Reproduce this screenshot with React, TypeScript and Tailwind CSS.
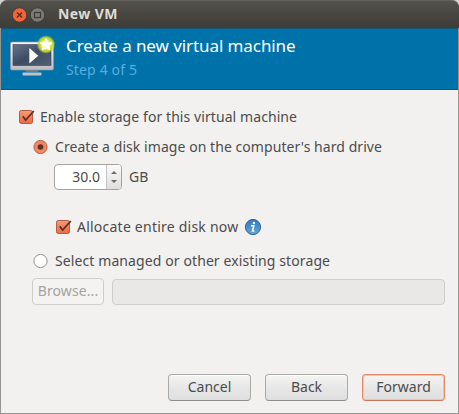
import type { ReactNode } from "react";

function CheckBox() {
  return (
    <svg width="16" height="16" viewBox="0 0 16 16" className="shrink-0">
      <defs>
        <linearGradient id="check" x1="0" y1="0" x2="0" y2="1">
          <stop offset="0" stopColor="#f79a78" />
          <stop offset="1" stopColor="#f06a40" />
        </linearGradient>
      </defs>
      <rect x="0.5" y="1.5" width="13" height="13" rx="1.8" fill="url(#check)" stroke="#b05f45" />
      <path d="M3.8 7.2 6.6 11 14.8 2" fill="none" stroke="#57342a" strokeWidth="1.8" />
    </svg>
  );
}

function Radio({ checked }: { checked?: boolean }) {
  return (
    <svg width="16" height="16" viewBox="0 0 16 16" className="shrink-0">
      <circle cx="7.5" cy="8" r="6.6" fill={checked ? "#f58560" : "#fff"} stroke={checked ? "#b8654a" : "#949290"} />
      {checked && <circle cx="7.5" cy="8" r="2.8" fill="#57342a" />}
    </svg>
  );
}

function MachineIcon() {
  return (
    <svg width="48" height="48" viewBox="0 0 48 48" className="shrink-0">
      <defs>
        <linearGradient id="bezel" x1="0" y1="0" x2="0" y2="1">
          <stop offset="0" stopColor="#fafafa" />
          <stop offset="1" stopColor="#bcbcc0" />
        </linearGradient>
        <linearGradient id="screen" x1="0" y1="0" x2="1" y2="1">
          <stop offset="0" stopColor="#66748c" />
          <stop offset="0.5" stopColor="#3d4b63" />
          <stop offset="1" stopColor="#526078" />
        </linearGradient>
        <radialGradient id="glow">
          <stop offset="0.4" stopColor="#eef250" />
          <stop offset="0.75" stopColor="#c6dc28" stopOpacity="0.9" />
          <stop offset="1" stopColor="#a5c934" stopOpacity="0" />
        </radialGradient>
      </defs>
      <path d="M18 38h12v3H18z" fill="#77777c" />
      <rect x="14.5" y="41.5" width="19" height="3" rx="1" fill="#c0c2c5" />
      <rect x="2.5" y="11" width="43" height="28" rx="1.5" fill="url(#bezel)" stroke="#8d99a5" strokeWidth="0.7" />
      <rect x="5" y="13.5" width="38" height="21" fill="url(#screen)" stroke="#3a4152" strokeWidth="0.6" />
      <path d="M21.3 17v15.5l9-7.7z" fill="#fff" />
      <circle cx="38" cy="13.5" r="9.5" fill="url(#glow)" />
      <path d="m38 7.6 1.8 3.8 4.2.5-3.1 2.9.8 4.1-3.7-2-3.7 2 .8-4.1-3.1-2.9 4.2-.5z" fill="#fffff4" stroke="#fffff4" strokeLinejoin="round" />
    </svg>
  );
}

function InfoIcon() {
  return (
    <svg width="18" height="18" viewBox="0 0 18 18" className="shrink-0">
      <defs>
        <linearGradient id="info" x1="0" y1="0" x2="0" y2="1">
          <stop offset="0" stopColor="#347abb" />
          <stop offset="1" stopColor="#65a5d5" />
        </linearGradient>
      </defs>
      <circle cx="9" cy="9" r="7.6" fill="url(#info)" stroke="#2c629a" />
      <circle cx="9.9" cy="5" r="1.2" fill="#fff" />
      <path d="M7 7.7h2.8L8.5 13h1.8" fill="none" stroke="#fff" strokeWidth="1.5" />
    </svg>
  );
}

function Button({ children, primary }: { children: ReactNode; primary?: boolean }) {
  return (
    <button
      className={`flex h-[27px] w-[83px] items-center justify-center rounded-[4px] border bg-linear-to-b from-[#f4f4f3] via-[#e5e5e5] via-60% to-[#dfdfdf] pb-px text-[14px] ${
        primary
          ? "border-[#e98765] border-b-[#c9785a] shadow-[inset_0_0_0_1px_#f3c3b2]"
          : "border-[#a9a9a6] border-b-[#8e8e8b] shadow-[inset_0_1px_0_#fff]"
      }`}
    >
      {children}
    </button>
  );
}

export default function App() {
  return (
    <div className="flex h-[414px] w-[459px] flex-col bg-[#d5d3d1] font-['Noto_Sans','Open_Sans',sans-serif] text-[14px] leading-[20px] text-[#4c4c4c]">
      <header className="flex h-7 shrink-0 items-center rounded-t-[7px] border-t border-[#62605a] bg-linear-to-b from-[#53514b] to-[#3d3c38] pl-3">
        <svg width="34" height="16" viewBox="0 0 34 16" className="shrink-0">
          <circle cx="7.5" cy="8" r="7.2" fill="#f26538" stroke="#383631" strokeWidth="0.8" />
          <path d="m5 5.5 5 5m0-5-5 5" stroke="#55301f" strokeWidth="1.4" />
          <circle cx="25.5" cy="8" r="7.2" fill="#7d7b75" stroke="#383631" strokeWidth="0.8" />
          <rect x="22.5" y="5.5" width="6" height="5" fill="none" stroke="#3b3a35" strokeWidth="1.2" />
        </svg>
        <h1 className="ml-3 whitespace-nowrap pb-px text-[14px] font-bold tracking-[0.4px] text-[#dfdbd2]">New VM</h1>
      </header>
      <div className="flex min-h-0 grow flex-col border-x border-b border-[#969490] bg-[#f2f1f0]">
        <section className="flex h-[62px] shrink-0 border-y border-[#145578] bg-[#0072aa] pl-[7px] pt-[2px]">
          <MachineIcon />
          <div className="ml-[10px] whitespace-nowrap pt-1">
            <h2 className="text-[17px] leading-[22px] tracking-[-0.08px] text-white">Create a new virtual machine</h2>
            <p className="mt-[3px] text-[14px] leading-[20px] tracking-[0.15px] text-[#57ade0]">Step 4 of 5</p>
          </div>
        </section>
        <main className="flex grow flex-col whitespace-nowrap pl-[18px] pr-[13px] pt-[17px]">
          <label className="flex h-5 items-center gap-[5px]"><CheckBox /><span className="tracking-[0.08px]">Enable storage for this virtual machine</span></label>
          <label className="ml-[14px] mt-[10px] flex h-5 items-center gap-[6px]"><Radio checked /><span className="tracking-[0.06px]">Create a disk image on the computer's hard drive</span></label>
          <div className="ml-[35px] mt-[7px] flex h-[26px] items-center">
            <div className="flex h-[26px] w-[68px] overflow-hidden rounded-[4px] border border-[#a5a4a1] bg-white">
              <span className="flex w-[51px] items-center justify-end pr-[6px]">30.0</span>
              <span className="flex grow items-center justify-center border-l border-[#c5c4c2] bg-linear-to-b from-[#fafafa] to-[#dededd]">
                <svg width="8" height="14" viewBox="0 0 8 14"><path d="M1 4 4 1l3 3zm0 6 3 3 3-3z" fill="#6b6b69" /></svg>
              </span>
            </div>
            <span className="ml-[7px]">GB</span>
          </div>
          <div className="ml-[37px] mt-[27px] flex h-5 items-center">
            <label className="flex items-center gap-[5px]"><CheckBox /><span className="tracking-[0.23px]">Allocate entire disk now</span></label>
            <span className="ml-[6px]"><InfoIcon /></span>
          </div>
          <label className="ml-[14px] mt-[14px] flex h-5 items-center gap-[6px]"><Radio /><span className="tracking-[0.1px]">Select managed or other existing storage</span></label>
          <div className="ml-[13px] mt-[7px] flex items-center gap-2">
            <button disabled className="h-[27px] w-[72px] rounded-[4px] border border-[#cfcdcb] bg-[#f4f3f2] pb-px text-[14px] tracking-[0.1px] text-[#a5a3a1]">Browse...</button>
            <div className="h-[26px] grow rounded-[4px] border border-[#cfcdcb] bg-[#e9e8e7]" />
          </div>
          <footer className="mb-[12px] mt-auto flex justify-end gap-[14px]">
            <Button>Cancel</Button><Button>Back</Button><Button primary>Forward</Button>
          </footer>
        </main>
      </div>
    </div>
  );
}
